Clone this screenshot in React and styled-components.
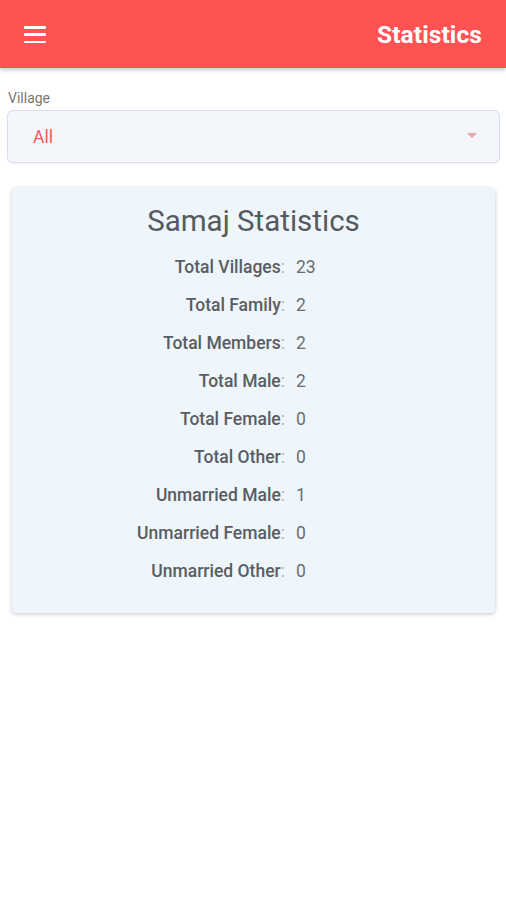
import React from "react";
import styled, { createGlobalStyle } from "styled-components";

const Global = createGlobalStyle`
  html, body { margin: 0; padding: 0; background: #ffffff; }
  body { font-family: Roboto, "Noto Sans", Arial, sans-serif; }
`;

const Page = styled.div`
  width: 506px;
  min-height: 900px;
  background: #fff;
`;

const Header = styled.header`
  height: 68px;
  background: #ff5252;
  display: flex;
  align-items: center;
  justify-content: space-between;
  padding: 0 24px 0 24px;
  box-sizing: border-box;
  box-shadow: 0 2px 4px rgba(0, 0, 0, 0.22);
  position: relative;
  z-index: 1;
`;

const MenuButton = styled.button`
  border: 0;
  background: none;
  padding: 0;
  width: 22px;
  height: 17px;
  display: flex;
  flex-direction: column;
  justify-content: space-between;
  margin-top: 1px;
`;

const MenuLine = styled.span`
  display: block;
  height: 2.5px;
  width: 22px;
  background: #fff;
  border-radius: 1px;
`;

const Title = styled.h1`
  margin: 0 0 0 0;
  color: #fff;
  font-size: 24.5px;
  font-weight: 700;
  letter-spacing: 0.1px;
`;

const Content = styled.main`
  padding: 22px 6px 0 7px;
`;

const FieldLabel = styled.label`
  display: block;
  font-size: 14px;
  color: #777;
  margin: 0 0 4px 1px;
  line-height: 16px;
`;

const Select = styled.div`
  height: 53px;
  box-sizing: border-box;
  border: 1px solid #d8dcef;
  border-radius: 6px;
  background: #f3f6fb;
  display: flex;
  align-items: center;
  justify-content: space-between;
  padding: 0 22px 0 25px;
  box-shadow: 0 1px 1px rgba(0, 0, 0, 0.05);
`;

const SelectValue = styled.span`
  color: #f25a5a;
  font-size: 17.5px;
`;

const Caret = styled.span`
  width: 0;
  height: 0;
  border-left: 5.5px solid transparent;
  border-right: 5.5px solid transparent;
  border-top: 5px solid #f5a3a3;
  margin-top: -2px;
`;

const Card = styled.section`
  margin: 25px 5px 0 5px;
  background: #eef5fb;
  border-radius: 4px;
  box-shadow: 0 1px 4px rgba(0, 0, 0, 0.22);
  padding: 15px 0 31px 0;
`;

const CardTitle = styled.h2`
  margin: 0 0 17px 0;
  text-align: center;
  font-size: 29.5px;
  font-weight: 400;
  color: #555a5f;
  line-height: 36px;
`;

const StatGrid = styled.dl`
  margin: 0;
  display: grid;
  grid-template-columns: 273px 1fr;
  column-gap: 11px;
  row-gap: 16px;
`;

const StatLabel = styled.dt`
  text-align: right;
  font-size: 17.5px;
  font-weight: 500;
  color: #5a5d62;
  line-height: 22px;
`;

const Colon = styled.span`
  color: #b0b4b8;
  font-weight: 400;
`;

const StatValue = styled.dd`
  margin: 0;
  font-size: 17.5px;
  color: #6a6e72;
  line-height: 22px;
`;

const stats = [
  ["Total Villages", "23"],
  ["Total Family", "2"],
  ["Total Members", "2"],
  ["Total Male", "2"],
  ["Total Female", "0"],
  ["Total Other", "0"],
  ["Unmarried Male", "1"],
  ["Unmarried Female", "0"],
  ["Unmarried Other", "0"],
];

export default function App() {
  return (
    <Page>
      <Global />
      <Header>
        <MenuButton aria-label="menu">
          <MenuLine />
          <MenuLine />
          <MenuLine />
        </MenuButton>
        <Title>Statistics</Title>
      </Header>
      <Content>
        <FieldLabel>Village</FieldLabel>
        <Select>
          <SelectValue>All</SelectValue>
          <Caret />
        </Select>
        <Card>
          <CardTitle>Samaj Statistics</CardTitle>
          <StatGrid>
            {stats.map(([k, v]) => (
              <React.Fragment key={k}>
                <StatLabel>
                  {k}
                  <Colon>:</Colon>
                </StatLabel>
                <StatValue>{v}</StatValue>
              </React.Fragment>
            ))}
          </StatGrid>
        </Card>
      </Content>
    </Page>
  );
}
